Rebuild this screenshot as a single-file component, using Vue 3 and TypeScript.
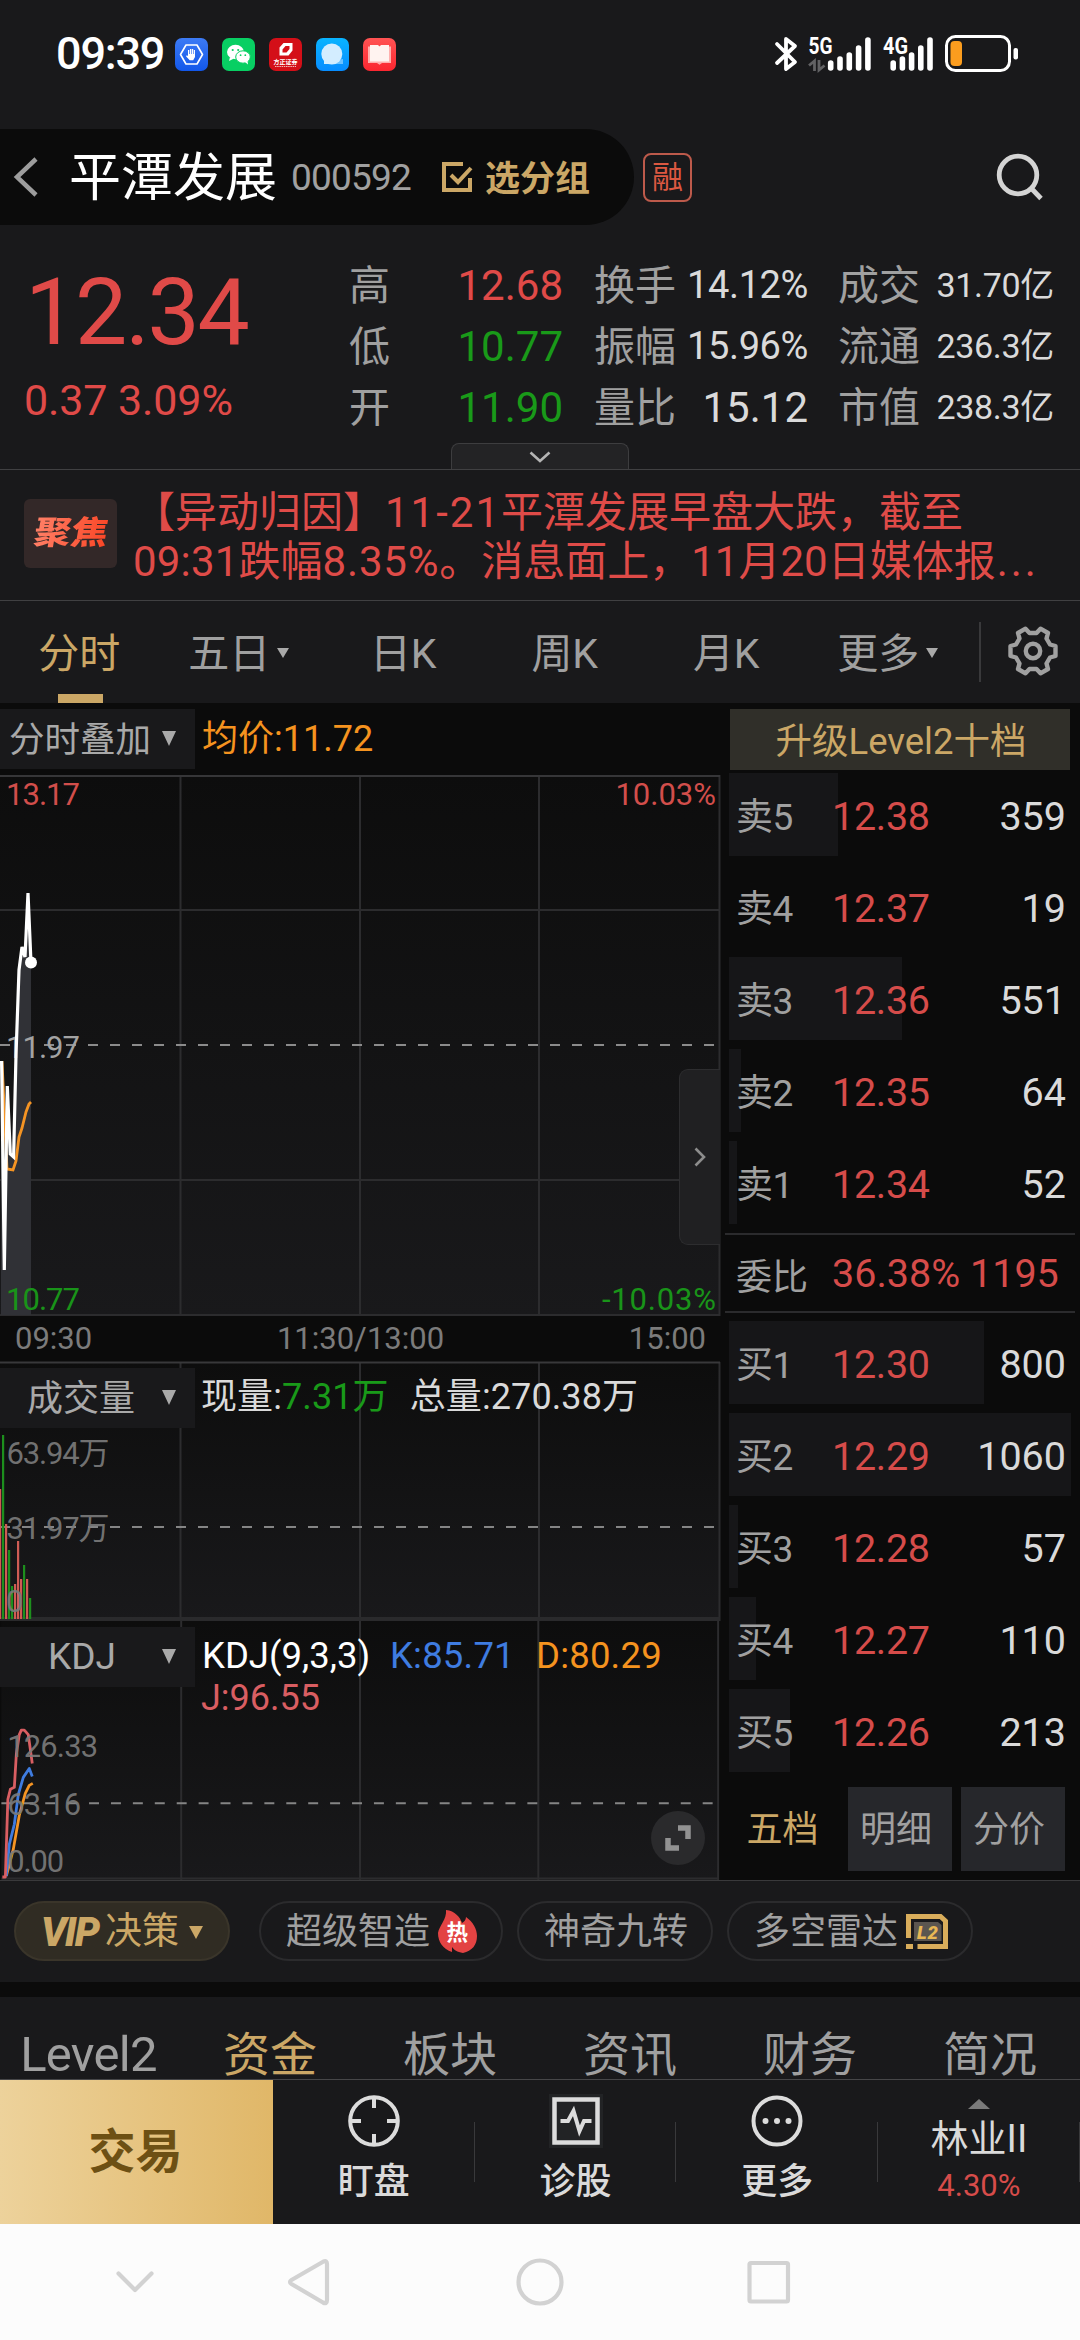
<script setup lang="ts">
interface Metric { label: string; value: string; tone?: string; size?: string }
interface Level { label: string; price: string; volume: string; bar: number }

const metricColumns: { key: string; rows: Metric[] }[] = [
  { key: 'a', rows: [
    { label: '高', value: '12.68', tone: 'red' },
    { label: '低', value: '10.77', tone: 'green' },
    { label: '开', value: '11.90', tone: 'green' },
  ] },
  { key: 'b', rows: [
    { label: '换手', value: '14.12%', size: 'mid' },
    { label: '振幅', value: '15.96%', size: 'mid' },
    { label: '量比', value: '15.12' },
  ] },
  { key: 'c', rows: [
    { label: '成交', value: '31.70亿', size: 'small' },
    { label: '流通', value: '236.3亿', size: 'small' },
    { label: '市值', value: '238.3亿', size: 'small' },
  ] },
]

const periods = [
  { name: '分时', active: true, drop: false },
  { name: '五日', active: false, drop: true },
  { name: '日K', active: false, drop: false },
  { name: '周K', active: false, drop: false },
  { name: '月K', active: false, drop: false },
  { name: '更多', active: false, drop: true },
]

const sells: Level[] = [
  { label: '卖5', price: '12.38', volume: '359', bar: 109 },
  { label: '卖4', price: '12.37', volume: '19', bar: 0 },
  { label: '卖3', price: '12.36', volume: '551', bar: 173 },
  { label: '卖2', price: '12.35', volume: '64', bar: 12 },
  { label: '卖1', price: '12.34', volume: '52', bar: 8 },
]
const buys: Level[] = [
  { label: '买1', price: '12.30', volume: '800', bar: 255 },
  { label: '买2', price: '12.29', volume: '1060', bar: 342 },
  { label: '买3', price: '12.28', volume: '57', bar: 9 },
  { label: '买4', price: '12.27', volume: '110', bar: 27 },
  { label: '买5', price: '12.26', volume: '213', bar: 61 },
]

// x offset, bar height, direction
const volumeBars: [number, number, 'up' | 'down'][] = [
  [-1, 130, 'up'], [2, 184, 'down'], [5, 95, 'up'], [8, 69, 'down'], [11, 33, 'down'],
  [14, 35, 'up'], [17, 78, 'up'], [20, 40, 'up'], [23, 54, 'down'], [26, 40, 'up'], [29, 21, 'down'],
]

const signalTops = [60, 56, 52, 45, 37]
const sections = ['Level2', '资金', '板块', '资讯', '财务', '简况']
</script>

<template>
  <div class="screen">
    <header class="status">
      <span class="clock">09:39</span>
      <div class="apps">
        <svg viewBox="0 0 33 33"><defs><linearGradient id="gb" x2="0" y2="1"><stop stop-color="#3d7bf5" /><stop offset="1" stop-color="#1257ea" /></linearGradient></defs><rect width="33" height="33" rx="7" fill="url(#gb)" /><path d="M11 7h11l5.500 9.500L22 26H11L5.500 16.500z" fill="none" stroke="#fff" stroke-width="1.600" stroke-linejoin="round" /><path d="M13 13v-1h1.300v4h.7v-5h1.300v5h.6v-5h1.300v5h.6v-4H20v7l-1.800 3.200h-3.500L11 18.200l.8-1 1.200.8z" fill="#fff" /></svg>
        <svg viewBox="0 0 33 33"><rect width="33" height="33" rx="7" fill="#08cf63" /><ellipse cx="13.500" cy="14" rx="8.500" ry="7.200" fill="#fff" /><path d="M8 19l-1 4 5-2.500z" fill="#fff" /><ellipse cx="21" cy="19" rx="7.300" ry="6.200" fill="#fff" stroke="#08cf63" stroke-width="1" /><path d="M23 24l3 2.500-.5-4z" fill="#fff" /><g fill="#08cf63"><circle cx="10.700" cy="12" r="1.100" /><circle cx="16.200" cy="12" r="1.100" /><circle cx="18.600" cy="17.200" r=".9" /><circle cx="23.300" cy="17.200" r=".9" /></g></svg>
        <svg viewBox="0 0 33 33"><rect width="33" height="33" rx="7" fill="#d40f18" /><path d="M10.500 17.500V9.500l4-4.500h9v7.500l-4 5zM13.500 14.500h4l3-3.500V8h-4l-3 3.500z" fill="#fff" fill-rule="evenodd" /><text x="4.500" y="26.300" font-size="6" font-weight="700" fill="#fff" textLength="24">方正证券</text><path d="M6 28.500h21" stroke="#fff" stroke-width="1" stroke-dasharray="1.500 .7" opacity=".7" /></svg>
        <svg viewBox="0 0 33 33"><defs><linearGradient id="gc" x2="0" y2="1"><stop stop-color="#09b4ff" /><stop offset="1" stop-color="#078cff" /></linearGradient></defs><rect width="33" height="33" rx="7" fill="url(#gc)" /><path d="M18 26h9v-5l-5 1z" fill="#6cc2ff" /><circle cx="15.800" cy="16" r="10.500" fill="#d3edff" /><path d="M8 22v4h6z" fill="#d3edff" /></svg>
        <svg viewBox="0 0 33 33"><defs><linearGradient id="gr" x2="0" y2="1"><stop stop-color="#ff5353" /><stop offset="1" stop-color="#fb2630" /></linearGradient></defs><rect width="33" height="33" rx="7" fill="url(#gr)" /><path d="M5 8.500h23V25h-9l-2.500 1.800L14 25H5z" fill="#ffb0ae" /><path d="M7 7h8l1.500 1.500L18 7h8v16.500H7z" fill="#fff3f0" /></svg>
      </div>
      <svg class="sys" viewBox="768 30 256 48">
        <path d="M777 44L795 62L786 69V39L795 46L777 63" fill="none" stroke="#fff" stroke-width="3.800" stroke-linejoin="round" stroke-linecap="round" />
        <g fill="#fff" font-weight="700" font-size="23"><text x="808.500" y="53.500" textLength="24" lengthAdjust="spacingAndGlyphs">5G</text><text x="883" y="53.500" textLength="25" lengthAdjust="spacingAndGlyphs">4G</text></g>
        <path d="M809 65.500L814.500 61V71M819 60V70L824.500 65.500" fill="none" stroke="#626264" stroke-width="2.800" />
        <g stroke="#fff" stroke-width="5.600" stroke-linecap="round">
          <line v-for="(t, i) in signalTops" :key="'a' + i" :x1="830.700 + i * 9.300" :x2="830.700 + i * 9.300" :y1="t + 3" y2="68" />
          <line v-for="(t, i) in signalTops" :key="'b' + i" :x1="893.200 + i * 9.200" :x2="893.200 + i * 9.200" :y1="t + 3" y2="68" />
        </g>
        <rect x="946.500" y="36.500" width="63" height="34" rx="9" fill="none" stroke="#fff" stroke-width="3" />
        <rect x="950.500" y="41" width="11.500" height="25" rx="4" fill="#fc9d1e" />
        <rect x="1013.500" y="48" width="4.500" height="11.500" rx="2" fill="#fff" />
      </svg>
    </header>

    <section class="title-bar">
      <div class="stock">
        <svg class="back" viewBox="0 0 24 40"><path d="M22 2L3 20L22 38" fill="none" stroke="#9d9d9d" stroke-width="4.500" /></svg>
        <h1>平潭发展</h1>
        <span class="code">000592</span>
        <svg class="check" viewBox="0 0 31 30"><path d="M21 2H2V28H28V16M9 13l7 7L29 6" fill="none" stroke="#cba766" stroke-width="4" /></svg>
        <b class="group">选分组</b>
      </div>
      <span class="margin-tag">融</span>
      <svg class="search" viewBox="0 0 48 48"><circle cx="22" cy="22" r="18.800" fill="none" stroke="#d4d4d4" stroke-width="4.800" /><path d="M35 35l10 10.500" stroke="#d4d4d4" stroke-width="4.800" /></svg>
    </section>

    <section class="quote">
      <div class="last">
        <div class="price">12.34</div>
        <div class="change">0.37 3.09%</div>
      </div>
      <div v-for="col in metricColumns" :key="col.key" class="metrics" :class="'col-' + col.key">
        <div v-for="m in col.rows" :key="m.label" class="metric">
          <span class="m-label">{{ m.label }}</span>
          <span :class="['m-value', m.tone, m.size]">{{ m.value }}</span>
        </div>
      </div>
      <div class="expand"><svg viewBox="0 0 22 12"><path d="M1.500 1.500L11 10L20.500 1.500" fill="none" stroke="#b4b4b4" stroke-width="2.600" /></svg></div>
    </section>

    <section class="news">
      <div class="focus"><span>聚焦</span></div>
      <p>
        <span class="line">【异动归因】<i class="w1">11-21</i>平潭发展早盘大跌，截至</span>
        <span class="line"><i class="w2">09:31</i>跌幅<i class="w3">8.35%</i>。消息面上，11月20日媒体报<i class="dots">...</i></span>
      </p>
    </section>

    <nav class="periods">
      <div v-for="p in periods" :key="p.name" class="period" :class="{ active: p.active }">
        <span>{{ p.name }}</span><i v-if="p.drop" class="tri" />
      </div>
      <div class="gear">
        <svg viewBox="-25 -25 50 50" fill="none" stroke="#a0a0a0" stroke-width="4.400" stroke-linejoin="round"><path d="M-7.500-22.300L-3.500-18H3.500L7.500-22.300L15-18L13.500-12.500L17-6.500L22.500-5V5L17 6.500L13.500 12.500L15 18L7.500 22.300L3.500 18H-3.500L-7.500 22.300L-15 18L-13.500 12.500L-17 6.500L-22.500 5V-5L-17-6.500L-13.500-12.500L-15-18Z" /><circle r="7.200" /></svg>
      </div>
    </nav>

    <main class="board">
      <div class="charts">
        <div class="pane-head top">
          <span class="select">分时叠加<i class="tri big" /></span>
          <span class="avg">均价:11.72</span>
        </div>
        <div class="pane price-pane">
          <svg viewBox="0 775 720 541">
            <defs><linearGradient id="bg1" x2="0" y2="1"><stop stop-color="#0d0d0d" /><stop offset="1" stop-color="#19191b" /></linearGradient></defs>
            <rect y="775" width="720" height="541" fill="url(#bg1)" />
            <g stroke="#2c2c2e" stroke-width="2"><path d="M0 910H720M0 1180H720M0 1315H720M180.500 775V1316M360 775V1316M539 775V1316M719.500 775V1316" /><path d="M0 776H720" stroke="#363638" /></g>
            <path d="M0 1045H720" stroke="#8b8b8b" stroke-width="2" stroke-dasharray="10 12" />
            <path d="M1 1061L4 1270L7 1087L10 1154L14 1157L16 1040L19 970L22 948L25 957L28 893L31 963V1315H1z" fill="#303136" />
            <g font-size="31"><text x="6" y="805" fill="#d24e4b" textLength="74">13.17</text><text x="716" y="805" fill="#d24e4b" text-anchor="end">10.03%</text><text x="6" y="1058" fill="#a3a3a3" textLength="74">11.97</text><text x="6" y="1310" fill="#199419" textLength="74">10.77</text><text x="716" y="1310" fill="#199419" text-anchor="end" textLength="114">-10.03%</text></g>
            <path d="M2 1061L7 1169L13 1170L16 1161L19 1137L22 1128L26 1112L29 1104L31 1102" fill="none" stroke="#f59423" stroke-width="2.800" />
            <path d="M1.600 1061L4.300 1270L7.300 1086L10.300 1154L13.600 1157L16 1055L19 970L22 947L25 957L28 893L31 963" fill="none" stroke="#fff" stroke-width="3.200" />
            <circle cx="31" cy="962.500" r="6" fill="#fff" />
          </svg>
          <div class="drawer"><svg viewBox="0 0 12 20"><path d="M1.500 1.500L10 10L1.500 18.500" fill="none" stroke="#8d8d8d" stroke-width="2.600" /></svg></div>
        </div>
        <div class="times"><span>09:30</span><span>11:30/13:00</span><span>15:00</span></div>
        <div class="pane volume-pane">
          <svg viewBox="0 1362 720 259">
            <rect y="1362" width="720" height="259" fill="url(#bg1)" />
            <path d="M180.500 1362V1621M360 1362V1621M539 1362V1621M719.500 1362V1621" stroke="#2c2c2e" stroke-width="2" />
            <path d="M0 1362.500H720" stroke="#38383a" stroke-width="2" /><path d="M0 1619H720" stroke="#2a2a2c" stroke-width="4" />
            <path d="M0 1527H720" stroke="#858585" stroke-width="2" stroke-dasharray="10 12" />
            <rect v-for="b in volumeBars" :key="b[0]" :x="b[0]" :y="1619 - b[1]" width="2.200" :height="b[1]" :fill="b[2] === 'up' ? '#cf5c54' : '#1d8f1d'" />
            <g font-size="31" fill="#7b7b7b" fill-opacity=".92"><text x="6.500" y="1464" textLength="103">63.94万</text><text x="6.500" y="1539" textLength="103">31.97万</text><text x="6" y="1612">0</text></g>
          </svg>
          <div class="pane-head">
            <span class="select">成交量<i class="tri big" /></span>
            <span class="legend"><em>现量:<b>7.31万</b></em><em>总量:270.38万</em></span>
          </div>
        </div>
        <div class="pane kdj-pane">
          <svg viewBox="0 1621 720 260">
            <rect y="1621" width="720" height="260" fill="url(#bg1)" />
            <path d="M180.500 1621V1881M360 1621V1881M539 1621V1881M719.500 1621V1881M0 1879.500H720" stroke="#2c2c2e" stroke-width="2" />
            <path d="M0 1804H720" stroke="#858585" stroke-width="2" stroke-dasharray="10 12" />
            <g fill="none" stroke-width="2.800" stroke-linejoin="round"><path d="M5 1877L12 1850L18 1816L24 1794L28 1786L31.500 1784" stroke="#f59423" /><path d="M5 1877L8 1845L13 1825L17 1795L22 1778L28 1769L31 1777" stroke="#3f7ce0" /><path d="M1 1878H4L6.500 1800L9 1790L13 1788L15 1755L18 1735L20 1730.500H23L27 1735L31 1764" stroke="#d95e62" /></g>
            <g font-size="31" fill="#7b7b7b" fill-opacity=".92"><text x="6" y="1758" textLength="91">126.33</text><text x="6" y="1816" textLength="74">63.16</text><text x="6" y="1873" textLength="57">0.00</text></g>
          </svg>
          <div class="pane-head">
            <span class="select kdj-name">KDJ<i class="tri big" /></span>
            <span class="kdj"><em class="white">KDJ(9,3,3)</em><em class="blue">K:85.71</em><em class="orange">D:80.29</em></span>
          </div>
          <div class="kdj-j">J:96.55</div>
          <div class="full"><svg viewBox="0 0 26 26"><path d="M13 3H23V14M3 13V23H14" fill="none" stroke="#929292" stroke-width="5.500" /></svg></div>
        </div>
      </div>

      <aside class="book">
        <div class="upgrade">升级Level2十档</div>
        <div v-for="l in sells" :key="l.label" class="level">
          <div class="depth" :style="{ width: l.bar + 'px' }" />
          <span class="l-name">{{ l.label }}</span><span class="l-price">{{ l.price }}</span><span class="l-vol">{{ l.volume }}</span>
        </div>
        <div class="ratio"><span class="r-name">委比</span><span class="r-pct">36.38%</span><span class="r-num">1195</span></div>
        <div v-for="l in buys" :key="l.label" class="level">
          <div class="depth" :style="{ width: l.bar + 'px' }" />
          <span class="l-name">{{ l.label }}</span><span class="l-price">{{ l.price }}</span><span class="l-vol">{{ l.volume }}</span>
        </div>
        <div class="book-tabs"><span class="on">五档</span><span>明细</span><span>分价</span></div>
      </aside>
    </main>

    <section class="tools">
      <div class="pill vip"><b>VIP</b><span>决策</span><i class="tri big" /></div>
      <div class="pill p2"><span>超级智造</span>
        <svg class="fire" viewBox="0 0 39 43"><path d="M8 0C17 1 22 7 24 13C26 12 28 10 28 7C35 12 39 19 39 26C39 35 34 41 25 43C19 42 16 40 14 37V42C5 39 0 32 0 23C1 16 9 9 8 0z" fill="#e34343" /><text x="8.500" y="29.500" font-size="21.500" font-weight="700" fill="#fff">热</text></svg>
      </div>
      <div class="pill p3"><span>神奇九转</span></div>
      <div class="pill p4"><span>多空雷达</span>
        <svg class="l2" viewBox="0 0 42 35"><path d="M2.500 24V2.500H34.500L39.500 7V32.500H11.500M0 32.500H7" fill="none" stroke="#d9ad5b" stroke-width="5" /><path d="M8 8H32L35.500 11V27H8z" fill="#5b5650" /><text x="11" y="24.500" font-size="18.500" font-weight="900" font-style="italic" fill="#e8b754" textLength="21">L2</text></svg>
      </div>
    </section>

    <nav class="sections"><span v-for="s in sections" :key="s" :class="{ active: s === '资金', latin: s === 'Level2' }">{{ s }}</span></nav>

    <footer class="actions">
      <div class="trade">交易</div>
      <div class="action"><svg viewBox="-27 -27 54 54" fill="none" stroke="#dcdcdc" stroke-width="4"><circle r="23.800" /><path d="M0-24V-13M0 24V13M-24 0H-13M24 0H13" /></svg><span>盯盘</span></div>
      <div class="action"><svg viewBox="-27 -27 54 54" fill="none" stroke="#dcdcdc" stroke-width="4.500"><rect x="-27" y="-27" width="54" height="54" fill="#222325" stroke="none" /><rect x="-21.500" y="-21.500" width="43" height="43" /><path d="M-15.500 0H-8L-2.500-10L3.500 10L8 0H15.500" stroke-width="4" /></svg><span>诊股</span></div>
      <div class="action"><svg viewBox="-27 -27 54 54"><circle r="23.500" fill="none" stroke="#dcdcdc" stroke-width="4" /><g fill="#dcdcdc"><circle cx="-11.500" r="3" /><circle r="3" /><circle cx="11.500" r="3" /></g></svg><span>更多</span></div>
      <div class="action sector"><i class="up" /><span>林业II</span><em>4.30%</em></div>
    </footer>

    <footer class="sysnav">
      <svg viewBox="0 2224 1080 116" fill="none" stroke="#d2d2d2" stroke-width="4.200" stroke-linecap="round" stroke-linejoin="round"><path d="M118.500 2273.500L135 2290L151.500 2273.500M291.500 2280L323.500 2261.500Q327 2260 327 2264V2300Q327 2304.500 323 2302.500L291.500 2284Q288.500 2282 291.500 2280z" /><circle cx="540" cy="2282" r="21.500" /><rect x="749.500" y="2263" width="38.500" height="38.500" rx="1.500" /></svg>
    </footer>
  </div>
</template>

<style>
body { margin: 0; background: #19191b; }
</style>

<style scoped>
.screen { width: 1080px; height: 2340px; overflow: hidden; display: flex; flex-direction: column; background: #19191b; color: #a0a0a0; font-family: Roboto, "Noto Sans CJK SC", sans-serif; white-space: nowrap; }
.screen > * { flex: none; box-sizing: border-box; }
svg { display: block; flex: none; overflow: visible; }
i, em { font-style: normal; }
.red { color: #e04a48; }
.green { color: #199a19; }

.status { height: 129px; display: flex; padding: 30px 56px 51px; align-items: center; }
.clock { width: 119px; color: #fff; font-size: 45px; font-weight: 500; letter-spacing: -1.200px; line-height: 48px; }
.apps { display: flex; gap: 14px; }
.apps svg { width: 33px; height: 33px; }
.sys { width: 256px; height: 48px; margin-left: auto; }

.title-bar { height: 96px; display: flex; align-items: center; }
.stock { width: 634px; height: 96px; box-sizing: border-box; display: flex; align-items: center; padding-left: 14px; background: #0b0b0b; border-radius: 0 48px 48px 0; }
.back { width: 24px; height: 40px; }
h1 { margin: 4px 0 0 31px; width: 222px; font-size: 52px; font-weight: 400; color: #fff; line-height: 96px; }
.code { width: 151px; font-size: 37px; letter-spacing: -.8px; }
.check { width: 31px; height: 30px; }
.group { margin: -4px 0 0 12px; font-size: 35px; color: #cba766; }
.margin-tag { width: 45px; height: 45px; margin-left: 9px; border: 2px solid #bd5a4b; border-radius: 8px; color: #dc5841; font-size: 31px; line-height: 45px; text-align: center; }
.search { width: 48px; height: 48px; margin-left: auto; margin-right: 36px; }

.quote { position: relative; height: 245px; display: flex; border-bottom: 1px solid #404042; }
.last { width: 349px; box-sizing: border-box; padding-left: 24px; color: #e04a48; }
.price { margin: 33px 0 0 1px; font-size: 93px; line-height: 110px; letter-spacing: -2.200px; }
.change { margin-top: 6px; font-size: 43px; line-height: 52px; letter-spacing: -.1px; }
.metrics { padding-top: 30px; }
.metric { display: flex; justify-content: space-between; align-items: center; height: 61px; font-size: 41px; line-height: 61px; }
.m-label { margin-top: 1px; }
.m-value { font-size: 42px; }
.col-b .m-value, .col-c .m-value { color: #dadada; }
.m-value.mid { font-size: 38px; letter-spacing: -.4px; }
.m-value.small { font-size: 34px; letter-spacing: -.3px; }
.col-a { width: 214px; }
.col-b { width: 214px; margin-left: 31px; }
.col-c { width: 216px; margin-left: 30px; }
.expand { position: absolute; left: 451px; bottom: 0; width: 176px; height: 25px; background: #232325; border: 1.500px solid #3d3d3f; border-bottom: 0; border-radius: 8px 8px 0 0; display: flex; justify-content: center; align-items: center; }
.expand svg { width: 22px; height: 12px; margin-top: 1px; }

.news { height: 131px; display: flex; padding: 17px 24px 0; border-bottom: 1px solid #404042; }
.focus { width: 93px; height: 69px; margin-top: 12px; border-radius: 6px; background: #332828; text-align: center; }
.focus span { display: inline-block; font-size: 37px; line-height: 68px; font-weight: 900; transform: skewX(-10deg) scaleY(.88); background: linear-gradient(90deg, #ff8067, #fb4626); background-clip: text; color: transparent; }
.news p { margin: 0 0 0 16px; color: #df4b48; font-size: 42px; }
.line { display: block; height: 49px; line-height: 51px; }
.w1 { letter-spacing: 2px; }
.w2 { letter-spacing: .2px; }
.w3 { letter-spacing: .8px; }
.dots { letter-spacing: 3px; margin-left: 1px; }

.periods { height: 102px; display: flex; align-items: center; }
.period { position: relative; width: 161.500px; height: 102px; box-sizing: border-box; display: flex; align-items: center; justify-content: center; gap: 7px; font-size: 41px; line-height: 98px; padding: 4px 1px 0 0; }
.period:nth-child(2) { padding-right: 7px; }
.period:nth-child(1) { padding-right: 3px; }
.period .tri { margin-top: -3px; }
.period.active { color: #cba766; }
.period.active::after { content: ""; position: absolute; bottom: 0; left: 58px; width: 45px; height: 9px; background: #cba766; }
.tri { border: 6px solid transparent; border-top: 10px solid #a9a9a9; border-bottom: 0; }
.tri.big { border-width: 15px 7.500px 0; }
.gear { display: flex; height: 60px; align-items: center; padding-left: 27px; margin-left: 10px; border-left: 2px solid #39393b; }
.gear svg { width: 50px; height: 50px; margin-top: -2px; }

.board { height: 1178px; display: flex; background: #0b0b0b; border-bottom: 1px solid #39393b; }
.charts { width: 720px; display: flex; flex-direction: column; }
.pane-head { position: relative; display: flex; align-items: center; height: 60px; margin-top: 6px; font-size: 36px; line-height: 60px; }
.pane-head.top { margin-bottom: 6px; }
.select { position: relative; width: 195px; height: 60px; line-height: 62px; padding: 0 43px 0 10px; text-align: center; background: #19191b; color: #a9a9a9; box-sizing: border-box; }
.pane-head.top .select { padding: 0 38px 0 3px; font-size: 35.500px; }
.kdj-name { padding: 0 41px 0 10px; font-size: 37px; line-height: 60px; }
.select .tri { position: absolute; left: 162px; top: 22px; }
.avg { margin: -1px 0 0 7px; color: #f5931f; }
.pane { position: relative; }
.pane > svg { position: absolute; inset: 0; width: 100%; height: 100%; }
.price-pane { height: 541px; }
.volume-pane { height: 259px; display: flow-root; }
.kdj-pane { height: 259px; display: flow-root; }
.drawer { position: absolute; right: 0; top: 294px; width: 40px; height: 174px; border: 1.500px solid #2d2d2f; border-right: 0; border-radius: 9px 0 0 9px; background: #202022; display: flex; align-items: center; justify-content: center; }
.drawer svg { width: 12px; height: 20px; }
.times { height: 46px; display: flex; align-items: center; justify-content: space-between; padding: 0 14px 0 15px; color: #7b7b7b; font-size: 31px; line-height: 48px; }
.times span:first-child { width: 128px; }
.times span:last-child { width: 128px; text-align: right; }
.legend { display: flex; gap: 21px; margin: -2px 0 0 6px; color: #dadada; letter-spacing: .1px; }
.legend b { font-weight: 400; color: #199a19; }
.kdj { display: flex; margin: -2px 0 0 7px; font-size: 36.500px; }
.kdj em { box-sizing: border-box; }
.white { color: #fff; width: 188px; }
.blue { color: #3f7ce0; width: 146px; }
.orange { color: #f5931f; }
.orange, .blue { letter-spacing: .2px; }
.kdj-j { position: relative; margin: -11px 0 0 201px; font-size: 36px; line-height: 44px; color: #d95e62; }
.full { position: absolute; right: 15px; bottom: 15px; width: 54px; height: 54px; border-radius: 50%; background: #2a2a2c; display: flex; align-items: center; justify-content: center; }
.full svg { width: 26px; height: 26px; }

.book { width: 360px; display: flex; flex-direction: column; }
.upgrade { margin: 6px 10px 3px; height: 61px; line-height: 65px; text-align: center; background: #302f29; color: #cba766; font-size: 36.500px; padding-left: 2px; box-sizing: border-box; }
.level { position: relative; height: 83px; margin-bottom: 9px; display: flex; align-items: center; padding: 4px 14px 0 16px; box-sizing: border-box; }
.depth { position: absolute; left: 9px; top: 0; height: 83px; background: #161618; }
.level span, .ratio span { position: relative; }
.l-name { width: 96px; margin-top: 2px; font-size: 37px; letter-spacing: -.5px; line-height: 78px; }
.l-price { color: #d64c4a; font-size: 39.500px; letter-spacing: -.3px; }
.l-vol { margin-left: auto; color: #dadada; font-size: 39.500px; }
.ratio { height: 80px; margin: 0 5px 8px; display: flex; align-items: center; padding: 1px 0 0 11px; border-top: 2px solid #2b2b2d; border-bottom: 2px solid #2b2b2d; box-sizing: border-box; color: #d64c4a; font-size: 39.500px; }
.r-name { width: 96px; color: #a0a0a0; font-size: 36px; }
.r-pct { width: 138px; }
.book-tabs { display: flex; gap: 9px; padding: 6px 15px 0 17px; font-size: 36px; }
.book-tabs span { width: 104px; height: 84px; line-height: 87px; text-align: center; background: #26272b; box-sizing: border-box; padding-right: 8px; }
.book-tabs .on { width: 102px; padding: 0 11px 0 0; background: none; color: #cba766; }

.tools { height: 101px; padding: 20px 14px 0; display: flex; }
.pill { height: 60px; box-sizing: border-box; border: 2px solid #2b2b2d; border-radius: 30px; display: flex; align-items: center; font-size: 36px; line-height: 54px; padding-left: 25px; }
.pill span { margin-top: 2px; }
.vip { width: 216px; margin-right: 29px; background: #302c23; border-color: #3a352a; color: #cba766; }
.vip b { width: 64px; margin-top: 3px; font-size: 40px; font-weight: 900; font-style: italic; letter-spacing: -1.800px; }
.vip span { font-size: 37px; }
.vip .tri { margin-left: 10px; margin-top: 2px; border-width: 13px 7.500px 0; border-top-color: #cba766; }
.p2 { width: 244px; margin-right: 14px; }
.p3 { width: 196px; margin-right: 14px; }
.p4 { width: 246px; }
.fire { width: 39px; height: 43px; margin-left: 8px; }
.l2 { width: 42px; height: 35px; margin-left: 8px; }

.sections { height: 98px; display: flex; border-top: 15px solid #0b0b0b; border-bottom: 1px solid #464648; }
.sections span { width: 180px; height: 82px; text-align: center; font-size: 47px; line-height: 115px; }
.sections .active { color: #cba766; }
.sections .latin { font-size: 49px; letter-spacing: -.7px; text-indent: -3px; }

.actions { height: 144px; display: flex; }
.trade { width: 273px; padding-right: 2px; background: linear-gradient(90deg, #edd29b, #e0b768); color: #6d5014; font-size: 47px; font-weight: 700; line-height: 144px; text-align: center; box-sizing: border-box; }
.action { position: relative; width: 201.700px; display: flex; flex-direction: column; align-items: center; color: #dadada; }
.action::after { content: ""; position: absolute; right: 0; top: 42px; width: 1px; height: 60px; background: #39393b; }
.action svg { width: 54px; height: 54px; margin-top: 14px; }
.action span { margin-top: 12px; font-size: 36px; font-weight: 500; line-height: 44px; }
.up { margin-top: 19px; border: 11px solid transparent; border-top: 0; border-bottom: 10px solid #7a7a7a; }
.sector span { margin-top: 8px; font-size: 38px; font-weight: 400; }
.action em { margin-top: 5px; font-size: 31px; line-height: 40px; color: #d64c4a; }

.sysnav { height: 116px; background: #fcfcfc; }
.sysnav svg { width: 1080px; height: 116px; }
</style>
